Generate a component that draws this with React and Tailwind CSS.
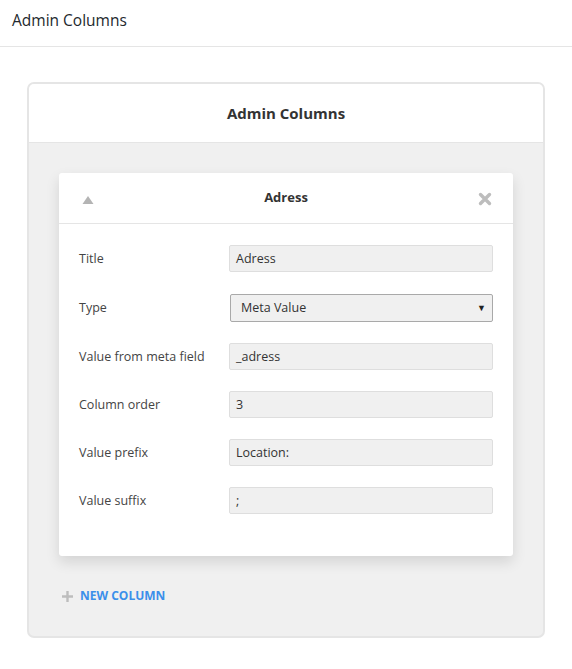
import React from "react";

const rows = [
  { label: "Title", value: "Adress" },
  { label: "Type", value: "Meta Value", select: true },
  { label: "Value from meta field", value: "_adress" },
  { label: "Column order", value: "3" },
  { label: "Value prefix", value: "Location:" },
  { label: "Value suffix", value: ";" },
];

export default function App() {
  return (
    <div className="min-h-[669px] bg-white text-[#333]" style={{ fontFamily: '"Open Sans", "Noto Sans", sans-serif' }}>
      <div className="h-[47px] border-b border-[#e5e5e5] flex items-center px-3 pb-[4px]">
        <span className="text-[15.5px] text-[#23282d]">Admin Columns</span>
      </div>
      <div className="px-[27px] pt-[35px] pb-[30px]">
        <div className="border-2 border-[#e5e5e5] rounded-[7px] overflow-hidden bg-[#f0f0f0]">
          <div className="h-[59px] bg-white border-b border-[#e5e5e5] flex items-center justify-center">
            <span className="text-[15px] font-bold text-[#333]">Admin Columns</span>
          </div>
          <div className="px-[30px] pt-[30px] pb-[30px]">
            <div className="bg-white rounded-[3px] shadow-[0_6px_14px_rgba(0,0,0,0.12)]">
              <div className="h-[51px] border-b border-[#e5e5e5] flex items-center justify-between px-[23px]">
                <svg width="12" height="10" viewBox="0 0 12 10" className="mt-[4px]">
                  <polygon points="6,1 11.5,9 0.5,9" fill="#b4b4b4" />
                </svg>
                <span className="text-[13px] font-bold text-[#333]">Adress</span>
                <svg width="14" height="14" viewBox="0 0 14 14" className="mr-[-2px] mt-[2px]">
                  <path d="M2.5 2.5 L11.5 11.5 M11.5 2.5 L2.5 11.5" stroke="#bdbdbd" strokeWidth="3.4" strokeLinecap="round" />
                </svg>
              </div>
              <div className="pl-[20px] pr-[20px] pt-[21px] pb-[42px] flex flex-col gap-[21px]">
                {rows.map((r) => (
                  <div key={r.label} className={r.select ? "flex items-center h-[28px] mt-[1px]" : "flex items-center h-[27px]"}>
                    <div className="w-[150px] text-[12.5px] text-[#444] pt-[1px]">{r.label}</div>
                    {r.select ? (
                      <div className="flex-1 h-[28px] border border-[#a9a9a9] rounded-[2px] bg-[#f0f0f0] flex items-center justify-between pl-[10px] pr-[6px] ml-[1px]">
                        <span className="text-[12.5px] text-[#333] pt-[1px]">{r.value}</span>
                        <span className="text-[9px] text-[#222]">▼</span>
                      </div>
                    ) : (
                      <div className="flex-1 h-[27px] border border-[#dedede] rounded-[2px] bg-[#f0f0f0] flex items-center px-[6px]">
                        <span className="text-[12.5px] text-[#333] pt-[1px]">{r.value}</span>
                      </div>
                    )}
                  </div>
                ))}
              </div>
            </div>
            <div className="mt-[30px] h-[20px] flex items-center pl-[3px]">
              <svg width="11" height="11" viewBox="0 0 11 11" className="mr-[7px]">
                <path d="M5.5 0 V11 M0 5.5 H11" stroke="#bdbdbd" strokeWidth="2.4" />
              </svg>
              <span className="text-[12px] font-bold text-[#3b8fea]">NEW COLUMN</span>
            </div>
          </div>
        </div>
      </div>
    </div>
  );
}
